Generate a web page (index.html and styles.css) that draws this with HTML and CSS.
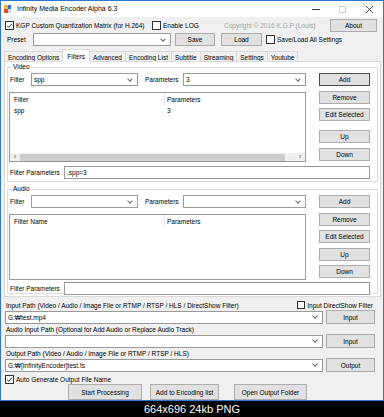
FILE: index.html
```html
<!DOCTYPE html>
<html lang="en">

<head>
    <meta charset="UTF-8">
    <link rel="stylesheet" href="styles.css">
    <title>Infinity Media Encoder</title>
</head>

<body>
    <div class="window">
        <div class="titlebar">
            <svg class="app-icon" width="7" height="8" viewBox="0 0 7 8">
                <rect x="0" y="0" width="7" height="8" fill="#e04b2f" />
                <rect x="0" y="0" width="4" height="4" fill="#f2b23c" />
                <rect x="4" y="0" width="3" height="4" fill="#2f6fd1" />
                <rect x="4" y="4" width="3" height="4" fill="#d7d7d7" />
            </svg>
            <span class="title">Infinity Media Encoder Alpha 6.3</span>
            <div class="win-ctrls">
                <span class="ctrl"><svg width="8" height="8" viewBox="0 0 8 8"><line x1="0" y1="4.5" x2="8" y2="4.5" stroke="#333" stroke-width="1" /></svg></span>
                <span class="ctrl"><svg width="7" height="7" viewBox="0 0 7 7"><rect x="0.5" y="0.5" width="6" height="6" fill="none" stroke="#cfcfcf" /></svg></span>
                <span class="ctrl"><svg width="7" height="7" viewBox="0 0 7 7"><path d="M0 0 L7 7 M7 0 L0 7" stroke="#333" stroke-width="0.9" /></svg></span>
            </div>
        </div>

        <div class="main">
            <div class="row top-row">
                <label class="check kgp"><span class="box"><svg width="7" height="7" viewBox="0 0 7 7"><polyline points="1,3.5 2.8,5.3 6,1.6" fill="none" stroke="#222" stroke-width="0.9" /></svg></span>KGP Custom Quantization Matrix (for H.264)</label>
                <label class="check log"><span class="box"></span>Enable LOG</label>
                <span class="copyright">Copyright © 2016 K.G.P (Louis)</span>
                <div class="btn about">About</div>
            </div>

            <div class="row preset-row">
                <span class="lbl preset-lbl">Preset</span>
                <div class="combo preset-combo"><span></span><i class="chev"></i></div>
                <div class="btn save">Save</div>
                <div class="btn load">Load</div>
                <label class="check all"><span class="box"></span>Save/Load All Settings</label>
            </div>

            <div class="tabs">
                <span class="tab">Encoding Options</span>
                <span class="tab active">Filters</span>
                <span class="tab">Advanced</span>
                <span class="tab">Encoding List</span>
                <span class="tab">Subtitle</span>
                <span class="tab">Streaming</span>
                <span class="tab">Settings</span>
                <span class="tab">Youtube</span>
            </div>

            <div class="tabpage">
                <fieldset class="group video">
                    <legend>Video</legend>
                    <div class="filter-row">
                        <span class="lbl f-lbl">Filter</span>
                        <div class="combo f-combo"><span>spp</span><i class="chev"></i></div>
                        <span class="lbl p-lbl">Parameters</span>
                        <div class="combo p-combo"><span>3</span><i class="chev"></i></div>
                        <div class="btn side default">Add</div>
                    </div>
                    <div class="mid">
                        <div class="list">
                            <div class="list-head">
                                <span class="col c1">Filter</span>
                                <span class="col c2">Parameters</span>
                            </div>
                            <div class="list-row">
                                <span class="col c1">spp</span>
                                <span class="col c2">3</span>
                            </div>
                            <div class="hscroll">
                                <span class="arrow">‹</span>
                                <span class="thumb"></span>
                                <span class="arrow">›</span>
                            </div>
                        </div>
                        <div class="side-btns">
                            <div class="btn side">Remove</div>
                            <div class="btn side edit">Edit Selected</div>
                            <div class="btn side up">Up</div>
                            <div class="btn side down">Down</div>
                        </div>
                    </div>
                    <div class="param-row">
                        <span class="lbl fp-lbl">Filter Parameters</span>
                        <div class="textbox">,spp=3</div>
                    </div>
                </fieldset>

                <fieldset class="group audio">
                    <legend>Audio</legend>
                    <div class="filter-row">
                        <span class="lbl f-lbl">Filter</span>
                        <div class="combo f-combo"><span></span><i class="chev"></i></div>
                        <span class="lbl p-lbl">Parameters</span>
                        <div class="combo p-combo"><span></span><i class="chev"></i></div>
                        <div class="btn side">Add</div>
                    </div>
                    <div class="mid">
                        <div class="list">
                            <div class="list-head">
                                <span class="col c1">Filter Name</span>
                                <span class="col c2">Parameters</span>
                            </div>
                        </div>
                        <div class="side-btns">
                            <div class="btn side">Remove</div>
                            <div class="btn side edit">Edit Selected</div>
                            <div class="btn side up">Up</div>
                            <div class="btn side down">Down</div>
                        </div>
                    </div>
                    <div class="param-row">
                        <span class="lbl fp-lbl">Filter Parameters</span>
                        <div class="textbox"></div>
                    </div>
                </fieldset>
            </div>

            <div class="paths">
                <div class="path-label">
                    <span>Input Path (Video / Audio / Image File or RTMP / RTSP / HLS / DirectShow Filter)</span>
                    <label class="check dshow"><span class="box"></span>Input DirectShow Filter</label>
                </div>
                <div class="path-row">
                    <div class="combo path-combo"><span>G:₩test.mp4</span><i class="chev"></i></div>
                    <div class="btn path-btn">Input</div>
                </div>
                <div class="path-label">
                    <span>Audio Input Path (Optional for Add Audio or Replace Audio Track)</span>
                </div>
                <div class="path-row">
                    <div class="combo path-combo"><span></span><i class="chev"></i></div>
                    <div class="btn path-btn">Input</div>
                </div>
                <div class="path-label">
                    <span>Output Path (Video / Audio / Image File or RTMP / RTSP / HLS)</span>
                </div>
                <div class="path-row">
                    <div class="combo path-combo"><span>G:₩[InfinityEncoder]test.ts</span><i class="chev"></i></div>
                    <div class="btn path-btn">Output</div>
                </div>
                <label class="check auto"><span class="box"><svg width="7" height="7" viewBox="0 0 7 7"><polyline points="1,3.5 2.8,5.3 6,1.6" fill="none" stroke="#222" stroke-width="0.9" /></svg></span>Auto Generate Output File Name</label>
            </div>

            <div class="actions">
                <div class="btn act start">Start Processing</div>
                <div class="btn act addlist">Add to Encoding list</div>
                <div class="btn act open">Open Output Folder</div>
            </div>
        </div>
    </div>

    <div class="caption">664x696 24kb PNG</div>
</body>

</html>
```

FILE: styles.css
```css
* {
    margin: 0;
    padding: 0;
    box-sizing: border-box;
}

body {
    width: 384px;
    height: 417px;
    overflow: hidden;
    background: #000;
    font-family: "Liberation Sans", Arial, sans-serif;
    font-size: 6.5px;
    color: #000;
}

.window {
    width: 384px;
    height: 401px;
    border: 1px solid #2b79d0;
    background: #f0f0f0;
    display: flex;
    flex-direction: column;
}

/* title bar */
.titlebar {
    height: 16px;
    background: #fff;
    display: flex;
    align-items: center;
    padding-left: 3px;
    flex-shrink: 0;
}

.app-icon {
    display: block;
    margin-top: -1px;
}

.title {
    font-size: 7px;
    margin-left: 6px;
    margin-top: -1px;
}

.win-ctrls {
    margin-left: auto;
    display: flex;
    height: 100%;
}

.ctrl {
    width: 27px;
    display: flex;
    align-items: center;
    justify-content: center;
}

/* common controls */
.main {
    padding: 1px 0 0 3px;
    flex: 1;
    display: flex;
    flex-direction: column;
}

.row {
    display: flex;
    align-items: center;
    height: 13px;
}

.lbl {
    white-space: nowrap;
}

.btn {
    height: 13px;
    background: #e1e1e1;
    border: 1px solid #adadad;
    display: flex;
    align-items: center;
    justify-content: center;
    white-space: nowrap;
    flex-shrink: 0;
}

.btn.default {
    border-color: #4a4a4a;
}

.combo,
.textbox {
    height: 13px;
    background: #fff;
    border: 1px solid #9a9a9a;
    display: flex;
    align-items: center;
    padding-left: 2px;
    flex-shrink: 0;
    white-space: nowrap;
}

.combo span {
    flex: 1;
}

.chev {
    width: 4px;
    height: 4px;
    border-right: 1px solid #666;
    border-bottom: 1px solid #666;
    transform: rotate(45deg);
    margin: -2px 5px 0 0;
}

.check {
    display: flex;
    align-items: center;
    white-space: nowrap;
}

.box {
    width: 9px;
    height: 9px;
    border: 1px solid #333;
    background: #fff;
    margin-right: 2px;
    display: flex;
    align-items: center;
    justify-content: center;
    flex-shrink: 0;
}

/* top rows */
.top-row {
    margin-top: 1px;
}

.kgp {
    width: 148px;
    padding-left: 1px;
}

.log {
    width: 72px;
}

.copyright {
    width: 106px;
    color: #a3a3a3;
}

.about {
    width: 47px;
}

.preset-row {
    margin-top: 1px;
}

.preset-lbl {
    width: 29px;
    padding-left: 3px;
}

.preset-combo {
    width: 138px;
}

.save {
    width: 40px;
    margin-left: 4px;
}

.load {
    width: 41px;
    margin-left: 6px;
}

.all {
    margin-left: 4px;
}

/* tabs */
.tabs {
    display: flex;
    align-items: flex-end;
    height: 14px;
    margin-top: 2px;
}

.tab {
    height: 11px;
    padding: 0 3px;
    border: 1px solid #d9d9d9;
    border-bottom: none;
    margin-right: -1px;
    background: #f0f0f0;
    display: flex;
    align-items: center;
    white-space: nowrap;
}

.tab.active {
    height: 13px;
    background: #fff;
    padding: 0 4px;
    position: relative;
    z-index: 1;
}

.tabpage {
    width: 377px;
    height: 236px;
    background: #fff;
    border: 1px solid #d9d9d9;
    margin-top: -1px;
    padding: 1px 2px 0 2px;
}

/* group boxes */
.group {
    border: 1px solid #dcdcdc;
    padding: 0 4px 0 1px;
}

.group legend {
    height: 8px;
    line-height: 8px;
    padding: 0 1px;
    margin-left: 3px;
}

.group.video {
    height: 119px;
}

.group.audio {
    height: 109px;
    margin-top: 3px;
}

.filter-row {
    display: flex;
    align-items: center;
    height: 13px;
    margin-top: 2px;
}

.f-lbl {
    width: 22px;
    padding-left: 1px;
}

.f-combo {
    width: 107px;
}

.p-lbl {
    width: 45px;
    padding-left: 7px;
}

.p-combo {
    width: 123px;
}

.btn.side {
    width: 51px;
}

.filter-row .btn.side {
    margin-left: 13px;
}

.mid {
    display: flex;
    margin-top: 5px;
}

.list {
    width: 297px;
    height: 70px;
    margin-top: 1px;
    border: 1px solid #9a9a9a;
    background: #fff;
    display: flex;
    flex-direction: column;
}

.audio .list {
    height: 66px;
}

.list-head {
    display: flex;
    height: 12px;
    align-items: center;
}

.list-row {
    display: flex;
    height: 10px;
    align-items: center;
}

.col.c1 {
    width: 155px;
    padding-left: 4px;
}

.list-head .col.c1 {
    border-right: 1px solid #e5e5e5;
    height: 12px;
    display: flex;
    align-items: center;
}

.col.c2 {
    padding-left: 2px;
}

.hscroll {
    margin-top: auto;
    height: 8px;
    background: #f0f0f0;
    display: flex;
    align-items: center;
}

.arrow {
    width: 10px;
    font-size: 8px;
    line-height: 8px;
    text-align: center;
    color: #606060;
}

.thumb {
    width: 265px;
    height: 7px;
    background: #cdcdcd;
}

.hscroll .arrow:last-child {
    margin-left: auto;
}

.side-btns {
    margin-left: 13px;
    display: flex;
    flex-direction: column;
}

.side-btns .edit {
    margin-top: 4px;
}

.side-btns .up {
    margin-top: 9px;
}

.side-btns .down {
    margin-top: 5px;
}

.audio .side-btns .up {
    margin-top: 5px;
}

.audio .side-btns .down {
    margin-top: 4px;
}

.param-row {
    display: flex;
    align-items: center;
    margin-top: 4px;
}

.audio .param-row {
    margin-top: 2px;
}

.fp-lbl {
    width: 55px;
    padding-left: 1px;
}

.textbox {
    width: 306px;
}

/* path section */
.paths {
    padding-left: 1px;
    display: flex;
    flex-direction: column;
}

.path-label {
    height: 10px;
    display: flex;
    align-items: center;
    justify-content: space-between;
    padding-left: 1px;
}

.path-label:first-child {
    margin-top: 3px;
}

.dshow {
    margin-right: 10px;
}

.dshow .box {
    width: 8px;
    height: 8px;
}

.path-row {
    display: flex;
    align-items: center;
    height: 14px;
}

.path-combo {
    width: 318px;
}

.path-btn {
    width: 49px;
    height: 14px;
    margin-left: 3px;
}

.auto {
    height: 10px;
    margin-top: 2px;
}

.actions {
    display: flex;
    height: 16px;
    margin-top: 0;
    padding-left: 64px;
}

.btn.act {
    height: 16px;
}

.start {
    width: 74px;
}

.addlist {
    width: 69px;
    margin-left: 8px;
}

.open {
    width: 73px;
    margin-left: 15px;
}

.caption {
    height: 16px;
    color: #fff;
    font-size: 11px;
    line-height: 16px;
    text-align: center;
}
```
